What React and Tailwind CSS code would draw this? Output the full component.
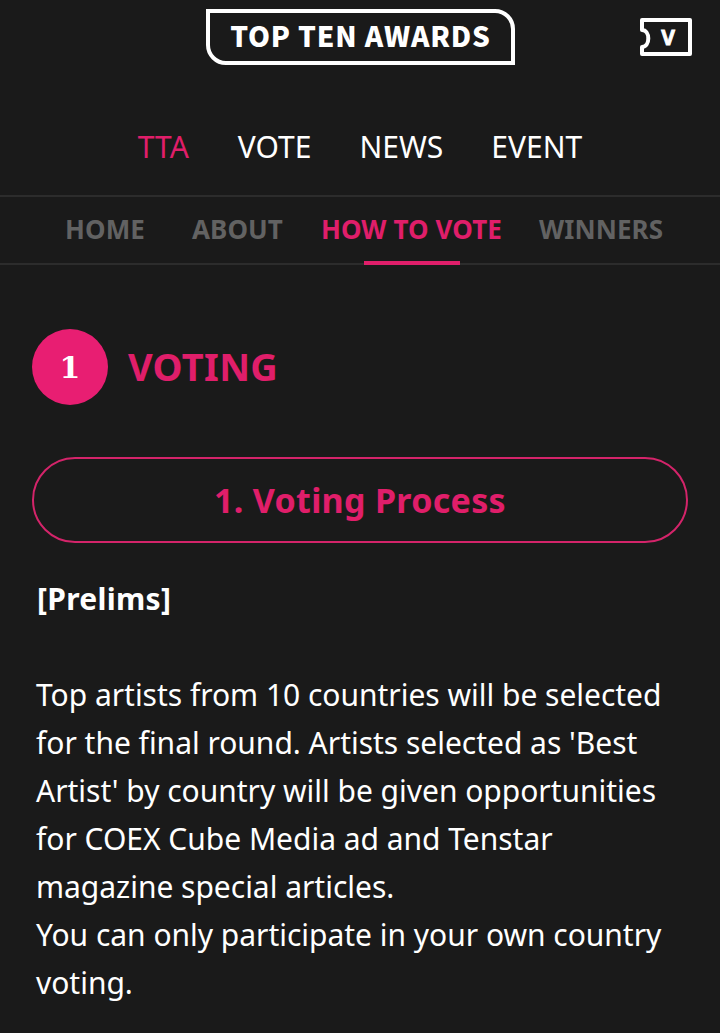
const MAIN_NAV = ['TTA', 'VOTE', 'NEWS', 'EVENT'];
const SUB_NAV = [
    { label: 'HOME', className: '' },
    { label: 'ABOUT', className: 'ml-[47px]' },
    { label: 'HOW TO VOTE', className: 'ml-[38px] text-[#e01e6a]', active: true },
    { label: 'WINNERS', className: 'ml-[37px]' },
];

function TicketIcon() {
    return (
        <svg width="52" height="38" viewBox="0 0 52 38" fill="none" className="block">
            <path d="M2 2H50V36H2V29C6 29 8.300 25 8.300 20.500C8.300 16 6 12 2 12V2Z" stroke="#fff" strokeWidth="4" strokeLinejoin="round" />
            <text x="28" y="26.500" textAnchor="middle" fill="#fff" stroke="#fff" strokeWidth="0.8" fontSize="21" fontWeight="700" fontFamily="Noto Sans, sans-serif">V</text>
        </svg>
    );
}

export default function App() {
    return (
        <div className="h-[1033px] overflow-hidden bg-[#1a1a1a] font-['Noto_Sans',sans-serif] text-white">
            <header className="relative h-[195px]">
                <div className="flex justify-center pt-[9px] pl-px">
                    <div className="flex h-[56px] w-[309px] items-center justify-center rounded-tr-[20px] rounded-bl-[20px] border-4 border-white pb-[4px] font-['Noto_Sans_CJK_KR',sans-serif] text-[28px] font-black tracking-[0.8px]">
                        TOP TEN AWARDS
                    </div>
                </div>
                <div className="absolute top-[18px] right-[28px]">
                    <TicketIcon />
                </div>
                <nav className="mt-[58px] flex justify-center gap-[48px] text-[30px] leading-[48px]">
                    {MAIN_NAV.map((item, i) => (
                        <span key={item} className={i === 0 ? 'mr-px text-[#e01e6a]' : ''}>{item}</span>
                    ))}
                </nav>
            </header>

            <nav className="flex h-[70px] justify-start border-y-2 border-[#2c2c2c] pb-[2px] pl-[65px] text-[26px] font-bold tracking-[0.1px] text-[#626262]">
                {SUB_NAV.map((item) => (
                    <div key={item.label} className={`relative flex items-center ${item.className}`}>
                        {item.label}
                        {item.active && <span className="absolute -bottom-[4px] left-[43px] h-1 w-[96px] bg-[#e01e6a]" />}
                    </div>
                ))}
            </nav>

            <main className="px-[32px]">
                <div className="mt-[64px] flex items-center gap-[20px]">
                    <div className="flex h-[76px] w-[76px] items-center justify-center rounded-full bg-[#e81e72] font-['DejaVu_Serif',serif] text-[30px] font-bold">1</div>
                    <h2 className="pb-[2px] text-[38px] font-bold tracking-[0.3px] text-[#e01e6a]">VOTING</h2>
                </div>
                <div className="mt-[52px] flex h-[86px] items-center justify-center rounded-[43px] border-2 border-[#d4246a] text-[34px] font-bold tracking-[0.3px] text-[#e01e6a]">
                    1. Voting Process
                </div>
                <div className="mt-[32px] px-[4px] text-[30px] leading-[48px] tracking-[-0.02px]">
                    <p className="pl-px font-bold tracking-[0.3px]">[Prelims]</p>
                    <p className="mt-[48px]">
                        Top artists from 10 countries will be selected for the final round. Artists selected as 'Best Artist' by country will be given opportunities for COEX Cube Media ad and Tenstar magazine special articles.
                    </p>
                    <p>You can only participate in your own country voting.</p>
                </div>
            </main>
        </div>
    );
}
